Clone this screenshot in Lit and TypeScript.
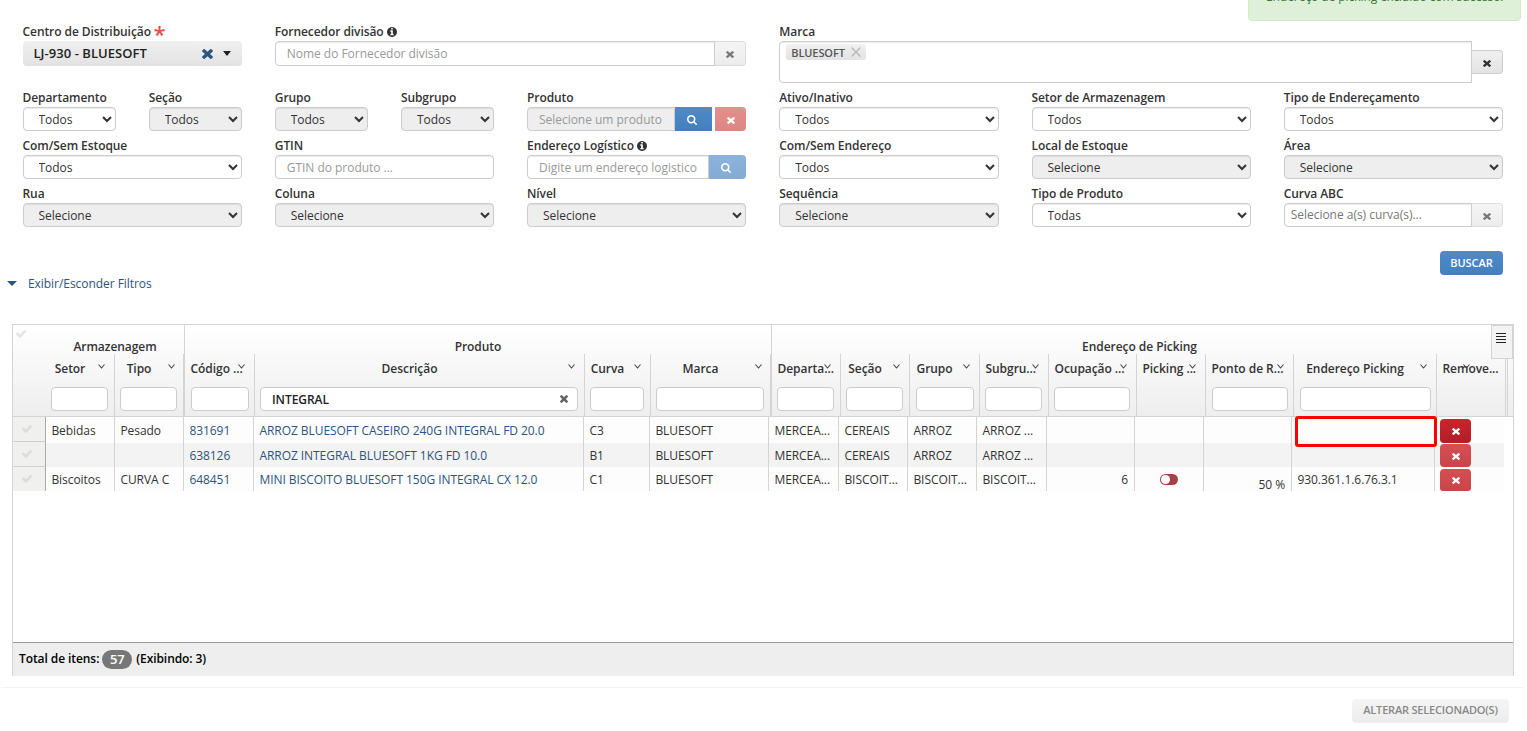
import { LitElement, html, css, svg, nothing } from "lit";
import { customElement, property } from "lit/decorators.js";
import { classMap } from "lit/directives/class-map.js";

const ICONS: Record<string, { box: string; d: string }> = {
  times: {
    box: "110 366 1188 1188",
    d: "M1298 1322q0 40-28 68l-136 136q-28 28-68 28t-68-28l-294-294-294 294q-28 28-68 28t-68-28l-136-136q-28-28-28-68t28-68l294-294-294-294q-28-28-28-68t28-68l136-136q28-28 68-28t68 28l294 294 294-294q28-28 68-28t68 28l136 136q28 28 28 68t-28 68l-294 294 294 294q28 28 28 68z",
  },
  search: {
    box: "0 128 1664 1664",
    d: "M1152 832q0-185-131.5-316.5t-316.5-131.5-316.5 131.5-131.5 316.5 131.5 316.5 316.5 131.5 316.5-131.5 131.5-316.5zm512 832q0 52-38 90t-90 38q-54 0-90-38l-343-342q-179 124-399 124-143 0-273.5-55.5t-225-150-150-225-55.5-273.5 55.5-273.5 150-225 225-150 273.5-55.5 273.5 55.5 225 150 150 225 55.5 273.5q0 220-124 399l343 343q37 37 37 90z",
  },
  check: {
    box: "121 340 1550 1182",
    d: "M1671 566q0 40-28 68l-724 724-136 136q-28 28-68 28t-68-28l-136-136-362-362q-28-28-28-68t28-68l136-136q28-28 68-28t68 28l294 295 656-657q28-28 68-28t68 28l136 136q28 28 28 68z",
  },
  info: {
    box: "128 128 1536 1536",
    d: "M1152 1376v-160q0-14-9-23t-23-9h-96v-512q0-14-9-23t-23-9h-320q-14 0-23 9t-9 23v160q0 14 9 23t23 9h96v320h-96q-14 0-23 9t-9 23v160q0 14 9 23t23 9h448q14 0 23-9t9-23zm-128-896v-160q0-14-9-23t-23-9h-192q-14 0-23 9t-9 23v160q0 14 9 23t23 9h192q14 0 23-9t9-23zm640 416q0 209-103 385.5t-279.5 279.5-385.5 103-385.5-103-279.5-279.5-103-385.5 103-385.5 279.5-279.5 385.5-103 385.5 103 279.5 279.5 103 385.5z",
  },
};

@customElement("ui-icon")
class UiIcon extends LitElement {
  @property() name = "times";
  static styles = css`
    :host { display: inline-block; width: 9px; height: 9px; flex: none; }
    svg { display: block; width: 100%; height: 100%; fill: currentColor; }
  `;
  render() {
    const icon = ICONS[this.name];
    return html`<svg viewBox=${icon.box} preserveAspectRatio="none">${svg`<path d=${icon.d}></path>`}</svg>`;
  }
}

type Field = { label: string; span: number; kind: string; text?: string; off?: boolean; info?: boolean; req?: boolean };

const FIELDS: Field[] = [
  { label: "Centro de Distribuição", span: 2, kind: "center", req: true },
  { label: "Fornecedor divisão", span: 4, kind: "supplier", info: true },
  { label: "Marca", span: 6, kind: "brand" },
  { label: "Departamento", span: 1, kind: "select", text: "Todos" },
  { label: "Seção", span: 1, kind: "select", text: "Todos", off: true },
  { label: "Grupo", span: 1, kind: "select", text: "Todos", off: true },
  { label: "Subgrupo", span: 1, kind: "select", text: "Todos", off: true },
  { label: "Produto", span: 2, kind: "product" },
  { label: "Ativo/Inativo", span: 2, kind: "select", text: "Todos" },
  { label: "Setor de Armazenagem", span: 2, kind: "select", text: "Todos" },
  { label: "Tipo de Endereçamento", span: 2, kind: "select", text: "Todos" },
  { label: "Com/Sem Estoque", span: 2, kind: "select", text: "Todos" },
  { label: "GTIN", span: 2, kind: "input", text: "GTIN do produto ..." },
  { label: "Endereço Logístico", span: 2, kind: "address", info: true },
  { label: "Com/Sem Endereço", span: 2, kind: "select", text: "Todos" },
  { label: "Local de Estoque", span: 2, kind: "select", text: "Selecione", off: true },
  { label: "Área", span: 2, kind: "select", text: "Selecione", off: true },
  { label: "Rua", span: 2, kind: "select", text: "Selecione", off: true },
  { label: "Coluna", span: 2, kind: "select", text: "Selecione", off: true },
  { label: "Nível", span: 2, kind: "select", text: "Selecione", off: true },
  { label: "Sequência", span: 2, kind: "select", text: "Selecione", off: true },
  { label: "Tipo de Produto", span: 2, kind: "select", text: "Todas" },
  { label: "Curva ABC", span: 2, kind: "curve" },
];

@customElement("filter-field")
class FilterField extends LitElement {
  @property({ attribute: false }) field!: Field;
  static styles = css`
    :host { display: block; min-width: 0; font: 12px/17px "Open Sans", sans-serif; color: #333; }
    * { box-sizing: border-box; }
    .label { display: flex; height: 17px; align-items: center; font-weight: 600; white-space: nowrap; padding-bottom: 2px; letter-spacing: -0.07px; }
    .label ui-icon { width: 10px; height: 10px; margin: 1px 0 0 3px; }
    .star { color: #d9534f; font-size: 22px; line-height: 10px; height: 7px; margin-left: 2.5px; }
    .control { display: flex; }
    select, input { font: 12px "Open Sans", sans-serif; color: #333; border: 1px solid #ccc; border-radius: 4px; height: 24px; width: 100%; min-width: 0; background: #fff; padding: 0 11px; margin: 0; box-shadow: inset 0 1px 1px rgba(0, 0, 0, 0.075); outline: 0; letter-spacing: -0.03px; }
    select:disabled, input:disabled { background: #eee; opacity: 1; }
    input::placeholder { color: #999; opacity: 1; }
    .joined { border-radius: 4px 0 0 4px; flex: 1; }
    .btn { display: flex; align-items: center; justify-content: center; width: 31.5px; height: 24px; flex: none; padding: 2px 0 0; border: 1px solid #ccc; border-left: 0; border-radius: 0 4px 4px 0; background: linear-gradient(#f0f0f0, #e3e3e3); color: #333; }
    .btn.faded { opacity: 0.65; }
    .btn ui-icon { width: 8px; height: 7px; }
    .joined.tall, .btn.tall { height: 25px; }
    .btn.blue, .btn.red { color: #fff; border: 0; }
    .btn.blue { background: linear-gradient(#4e8bcb, #447ebd); }
    .btn.blue ui-icon { width: 10px; height: 10px; margin-right: 3px; }
    .btn.red { background: linear-gradient(#d9534f, #c74844); }
    .btn.wide { width: 37px; }
    .btn.red.gap { width: 31px; margin-left: 3px; }
    .btn.search { border-radius: 0; }
    .curve { padding: 0 6px 2px; }
    .curve::placeholder { color: #777; }
    .center { display: flex; align-items: center; height: 25px; border-radius: 4px; background: linear-gradient(#f0f0f0, #e2e2e2); padding: 0 11px; font-size: 13px; font-weight: 600; color: #222; letter-spacing: 0.05px; }
    .center .value { flex: 1; }
    .clear { display: flex; align-items: center; justify-content: center; width: 29px; height: 23px; border-radius: 3px; background: linear-gradient(#f0f0f0, #e3e3e3); color: #2b5480; margin-right: 1px; padding-top: 1px; }
    .clear ui-icon { width: 11px; height: 10px; }
    .caret { width: 0; border: 4.5px solid transparent; border-top: 5px solid #222; border-bottom: 0; }
    .brand { flex: 1; height: 42px; border: 1px solid #ccc; border-radius: 4px 0 0 4px; padding: 2px 6px; background: #fff; box-shadow: inset 0 1px 1px rgba(0, 0, 0, 0.075); }
    .chip { display: inline-flex; align-items: center; height: 16px; gap: 6px; padding: 0 5px; border-radius: 3px; background: linear-gradient(#f1f1f1, #e2e2e2); font-size: 11px; font-weight: 600; color: #555; vertical-align: top; letter-spacing: -0.1px; }
    .chip svg { width: 10px; height: 10px; stroke: #bbb; stroke-width: 1.5; }
    .control.mid { align-items: center; }
  `;
  control(f: Field) {
    switch (f.kind) {
      case "center":
        return html`<div class="center"><span class="value">LJ-930 - BLUESOFT</span><span class="clear"><ui-icon name="times"></ui-icon></span><span class="caret"></span></div>`;
      case "supplier":
        return html`<div class="control"><input class="joined tall" placeholder="Nome do Fornecedor divisão" /><button class="btn faded tall"><ui-icon name="times"></ui-icon></button></div>`;
      case "brand":
        return html`<div class="control mid"><div class="brand"><span class="chip">BLUESOFT<svg viewBox="0 0 10 10"><path d="M.5.5l9 9M9.500.5l-9 9"></path></svg></span></div><button class="btn"><ui-icon name="times"></ui-icon></button></div>`;
      case "product":
        return html`<div class="control"><input class="joined" disabled placeholder="Selecione um produto" /><button class="btn blue search wide"><ui-icon name="search"></ui-icon></button><button class="btn red faded gap"><ui-icon name="times"></ui-icon></button></div>`;
      case "address":
        return html`<div class="control"><input class="joined" placeholder="Digite um endereço logistico" /><button class="btn blue faded wide"><ui-icon name="search"></ui-icon></button></div>`;
      case "curve":
        return html`<div class="control"><input class="joined curve" placeholder="Selecione a(s) curva(s)..." /><button class="btn faded"><ui-icon name="times"></ui-icon></button></div>`;
      case "input":
        return html`<input placeholder=${f.text!} />`;
      default:
        return html`<select ?disabled=${f.off}><option>${f.text}</option></select>`;
    }
  }
  render() {
    const f = this.field;
    return html`
      <div class="label">${f.label}${f.req ? html`<span class="star">*</span>` : nothing}${f.info ? html`<ui-icon name="info"></ui-icon>` : nothing}</div>
      ${this.control(f)}`;
  }
}

type Column = { title: string; head: number; body: number; cut?: boolean; filter?: boolean; value?: string; edge?: boolean; shift?: boolean };

const COLUMNS: Column[] = [
  { title: "Setor", head: 69, body: 69, filter: true },
  { title: "Tipo", head: 70, body: 69, filter: true, edge: true },
  { title: "Código ...", head: 70, body: 70, cut: true, filter: true, shift: true },
  { title: "Descrição", head: 330, body: 330, filter: true, value: "INTEGRAL" },
  { title: "Curva", head: 66, body: 66, filter: true },
  { title: "Marca", head: 121, body: 119, filter: true, edge: true },
  { title: "Departa...", head: 69, body: 70, cut: true, filter: true },
  { title: "Seção", head: 69, body: 69, filter: true },
  { title: "Grupo", head: 70, body: 69, filter: true, shift: true },
  { title: "Subgru...", head: 69, body: 70, cut: true, filter: true },
  { title: "Ocupação ...", head: 88, body: 88, cut: true, filter: true },
  { title: "Picking ...", head: 69, body: 69, cut: true },
  { title: "Ponto de R...", head: 88, body: 88, cut: true, filter: true, shift: true },
  { title: "Endereço Picking", head: 143, body: 143, filter: true, shift: true },
  { title: "Remove...", head: 69, body: 69, cut: true },
];

const ROWS: string[][] = [
  ["Bebidas", "Pesado", "831691", "ARROZ BLUESOFT CASEIRO 240G INTEGRAL FD 20.0", "C3", "BLUESOFT", "MERCEA...", "CEREAIS", "ARROZ", "ARROZ ...", "", "", "", "", ""],
  ["", "", "638126", "ARROZ INTEGRAL BLUESOFT 1KG FD 10.0", "B1", "BLUESOFT", "MERCEA...", "CEREAIS", "ARROZ", "ARROZ ...", "", "", "", "", ""],
  ["Biscoitos", "CURVA C", "648451", "MINI BISCOITO BLUESOFT 150G INTEGRAL CX 12.0", "C1", "BLUESOFT", "MERCEA...", "BISCOIT...", "BISCOIT...", "BISCOIT...", "6", "switch", "50 %", "930.361.1.6.76.3.1", ""],
];

const GROUPS = [
  { title: "Armazenagem", width: 139 },
  { title: "Produto", width: 587 },
  { title: "Endereço de Picking", width: 735 },
];

@customElement("picking-grid")
class PickingGrid extends LitElement {
  static styles = css`
    :host { display: block; width: 1502px; height: 352px; border: 1px solid #d4d4d4; border-bottom: 0; font: 12px/17px "Open Sans", sans-serif; color: #333; box-sizing: border-box; position: relative; }
    * { box-sizing: border-box; }
    .head { display: flex; height: 92px; background: linear-gradient(#fff, #eee); border-bottom: 1px solid #d4d4d4; letter-spacing: -0.05px; }
    .corner { width: 33px; flex: none; padding: 5px 0 0 3px; color: #e4e4e4; }
    .corner ui-icon { width: 10px; height: 8px; display: block; }
    .groups { display: flex; height: 29px; font-weight: 600; }
    .group { flex: none; text-align: center; padding-top: 13px; border-right: 1px solid #d4d4d4; }
    .group:last-child { border-right: 0; }
    .cols { display: flex; height: 62px; }
    .col { flex: none; height: 62px; border-right: 1px solid #d4d4d4; position: relative; padding: 6px 5px 0; font-weight: 600; }
    .col.edge { border-right-width: 2px; }
    .name { display: block; height: 27px; text-align: center; padding-right: 20px; white-space: nowrap; }
    .name.cut { text-align: left; padding: 0 0 0 0.5px; }
    .chev { position: absolute; right: 9px; top: 10px; width: 7px; height: 5px; fill: none; stroke: #444; stroke-width: 1.1; }
    .edge .chev { right: 8px; }
    .chev.over { right: 35px; }
    .box { display: flex; align-items: center; justify-content: space-between; height: 24px; border: 1px solid #ccc; border-radius: 4px; background: #fff; padding: 0 9px 0 11px; margin-right: 1px; color: #222; }
    .box.shift { margin: 0 0 0 1px; }
    .box ui-icon { color: #666; width: 8px; height: 8px; }
    .tail { width: 2px; border-right: 1px solid #d4d4d4; height: 62px; }
    .menu { position: absolute; right: 0; top: 0; width: 22px; height: 34px; border: 1px solid #d4d4d4; background: #f3f3f3; padding: 7px 0 0 4px; }
    .menu i { display: block; width: 10px; height: 1px; background: #222; margin-bottom: 2px; }
    .row { display: flex; height: 24px; letter-spacing: -0.055px; }
    .row.first { height: 26px; }
    .pick { width: 33px; flex: none; background: #f0f0ee; border-right: 1px solid #aaa; border-bottom: 1px solid #d0d0d0; color: #dcdcda; display: flex; align-items: center; justify-content: center; padding-right: 5px; }
    .pick ui-icon { width: 10px; height: 8px; }
    .row:last-child .pick { border-bottom: 0; }
    .row.first .pick { height: 25px; }
    .row.even .pick { height: 25px; margin-top: -1px; }
    .cell { flex: none; border-right: 1px solid #d4d4d4; padding: 4px 6px 0 5.4px; background: #fdfdfd; white-space: nowrap; position: relative; }
    .row.first .cell { padding-top: 5px; }
    .row.even .cell { background: #f3f3f3; }
    .row .cell:last-child { border-right: 0; padding: 1px 0 0 5px; overflow: hidden; }
    .row.first .cell:last-child, .row.last .cell:last-child { padding-top: 2px; }
    .link { color: #2b5480; }
    .right { text-align: right; }
    .low { padding-top: 9px; }
    .del { display: flex; align-items: center; justify-content: center; width: 31px; height: 24px; border: 0; border-radius: 4px; background: linear-gradient(#d84e52, #c74549); color: #fff; padding: 1px 0 0; }
    .even .del { height: 23px; padding-top: 2px; }
    .last .del { height: 22px; border-radius: 4px 4px 3px 3px; }
    .first .del { background: linear-gradient(#c9252d, #b31d26); }
    .del ui-icon { width: 8px; height: 7px; }
    .switch { display: block; width: 18px; height: 11px; border-radius: 6px; background: #a94045; margin: 3px 0 0 20px; padding: 1px; }
    .switch::before { content: ""; display: block; width: 9px; height: 9px; border-radius: 50%; background: #fff; }
    .mark { position: absolute; left: 3px; top: -1px; width: 142px; height: 31px; border: 3px solid #f00; border-radius: 3px; z-index: 2; }
    .body { height: 225px; }
    .foot { height: 34px; border-top: 1px solid #999; background: #eee; display: flex; align-items: center; gap: 4px; padding: 0 6px 3px; font-weight: 600; color: #000; letter-spacing: -0.08px; }
    .badge { background: #777; color: #fff; border-radius: 10px; width: 30px; height: 19px; text-align: center; font-size: 13px; line-height: 19px; margin: 2px 0 0 -1px; }
  `;
  cell(row: string[], text: string, i: number, r: number) {
    const classes = { cell: true, link: i === 2 || i === 3, right: i === 10 || i === 12, low: i === 12 };
    const content = i === 14
      ? html`<button class="del"><ui-icon name="times"></ui-icon></button>`
      : text === "switch" ? html`<span class="switch"></span>` : text;
    return html`<div class=${classMap(classes)} style="width:${COLUMNS[i].body}px">${content}${r === 0 && i === 13 ? html`<span class="mark"></span>` : nothing}</div>`;
  }
  render() {
    return html`
      <div class="head">
        <div class="corner"><ui-icon name="check"></ui-icon></div>
        <div>
          <div class="groups">${GROUPS.map((g) => html`<div class="group" style="width:${g.width}px">${g.title}</div>`)}</div>
          <div class="cols">
            ${COLUMNS.map((c, i) => html`<div class="col ${c.edge ? "edge" : ""}" style="width:${c.head}px">
              <span class="name ${c.cut ? "cut" : ""}">${c.title}</span>
              <svg class="chev ${i === 14 ? "over" : ""}" viewBox="0 0 7 5"><path d="M.5.5l3 3.500 3-3.500"></path></svg>
              ${c.filter ? html`<div class="box ${c.shift ? "shift" : ""}">${c.value ?? nothing}${c.value ? html`<ui-icon name="times"></ui-icon>` : nothing}</div>` : nothing}
            </div>`)}
            <div class="tail"></div>
          </div>
        </div>
      </div>
      <div class="menu"><i></i><i></i><i></i><i></i></div>
      <div class="body">
        ${ROWS.map((row, r) => html`<div class="row ${["first", "even", "last"][r]}">
          <div class="pick"><ui-icon name="check"></ui-icon></div>
          ${row.map((t, i) => this.cell(row, t, i, r))}
        </div>`)}
      </div>
      <div class="foot"><span>Total de itens:</span><span class="badge">57</span><span>(Exibindo: 3)</span></div>
    `;
  }
}

@customElement("app-root")
class AppRoot extends LitElement {
  static styles = css`
    :host { display: block; position: relative; width: 100%; height: 731px; overflow: hidden; background: #fff; font: 12px/17px "Open Sans", sans-serif; color: #333; }
    * { box-sizing: border-box; }
    .toast { position: absolute; right: 6px; top: -29px; width: 273px; height: 50px; border: 1px solid #d6e9c6; border-radius: 4px; background: #dff0d8; color: #3c763d; padding: 16px 17px; white-space: nowrap; letter-spacing: -0.06px; }
    .filters { display: grid; grid-template-columns: repeat(12, minmax(0, 1fr)); column-gap: 33px; row-gap: 7px; padding: 24px 24px 0 22.5px; }
    .span1 { grid-column: span 1; }
    .span2 { grid-column: span 2; }
    .span4 { grid-column: span 4; }
    .span6 { grid-column: span 6; }
    .actions { display: flex; justify-content: flex-end; padding: 24px 24px 0 0; }
    .buscar, .alter { font: 600 11px/22px "Open Sans", sans-serif; border: 0; height: 24px; border-radius: 4px; padding: 0; }
    .buscar { width: 63px; color: #fff; background: linear-gradient(#4e8bcb, #447ebd); }
    .toggle { display: flex; align-items: center; gap: 11px; padding-left: 7px; color: #2b5480; height: 17px; letter-spacing: -0.05px; }
    .caret { border: 5px solid transparent; border-top: 5px solid #2b5480; border-bottom: 0; margin-top: -1px; }
    .sheet { padding: 32px 0 0 12px; }
    .footer { margin: 11px 3px 0 1px; border-top: 1px solid #f1f1f8; padding: 11px 15px 0 0; display: flex; justify-content: flex-end; }
    .alter { width: 157px; color: #888; background: linear-gradient(#f5f5f5, #ececec); letter-spacing: -0.19px; padding-bottom: 2px; }
  `;
  render() {
    return html`
      <div class="filters">${FIELDS.map((f) => html`<filter-field class="span${f.span}" .field=${f}></filter-field>`)}</div>
      <div class="actions"><button class="buscar">BUSCAR</button></div>
      <div class="toggle"><span class="caret"></span><span>Exibir/Esconder Filtros</span></div>
      <div class="sheet"><picking-grid></picking-grid></div>
      <div class="footer"><button class="alter">ALTERAR SELECIONADO(S)</button></div>
      <div class="toast">Endereço de picking excluído com sucesso!</div>
    `;
  }
}
